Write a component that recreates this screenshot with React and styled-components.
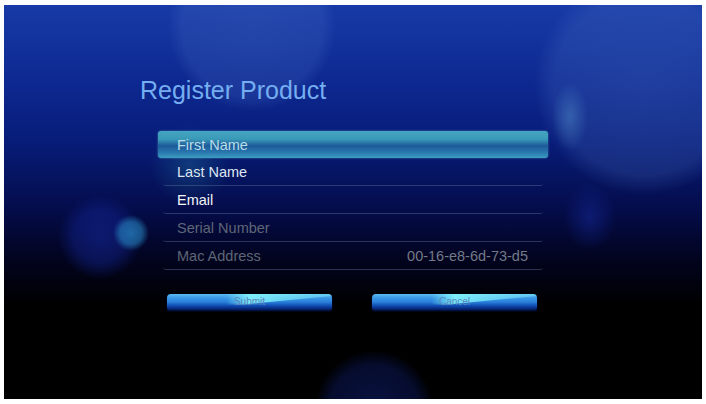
import React from "react";
import styled, { createGlobalStyle } from "styled-components";

const GlobalStyle = createGlobalStyle`
  html, body {
    margin: 0;
    padding: 0;
    background: #ffffff;
  }
  body {
    font-family: "Liberation Sans", Arial, sans-serif;
  }
`;

const Screen = styled.div`
  position: relative;
  overflow: hidden;
  margin: 5px 0 0 4px;
  width: 698px;
  height: 394px;
  box-sizing: border-box;
  padding: 70px 0 0 136px;
  background:
    radial-gradient(circle at 640px 80px, rgba(80, 120, 200, 0.28) 0, rgba(80, 120, 200, 0.22) 90px, rgba(80, 120, 200, 0) 110px),
    radial-gradient(ellipse 18px 34px at 566px 112px, rgba(110, 190, 230, 0.35) 0, rgba(110, 190, 230, 0) 100%),
    radial-gradient(circle at 248px 22px, rgba(90, 130, 210, 0.22) 0, rgba(90, 130, 210, 0.18) 70px, rgba(90, 130, 210, 0) 84px),
    radial-gradient(circle at 127px 228px, rgba(40, 140, 200, 0.7) 0, rgba(40, 140, 200, 0.55) 11px, rgba(40, 140, 200, 0) 18px),
    radial-gradient(circle at 96px 232px, rgba(20, 40, 160, 0.55) 0, rgba(20, 40, 160, 0.4) 26px, rgba(20, 40, 160, 0) 42px),
    radial-gradient(ellipse 26px 34px at 586px 212px, rgba(20, 40, 150, 0.55) 0, rgba(20, 40, 150, 0) 100%),
    radial-gradient(circle at 186px 160px, rgba(40, 150, 170, 0.28) 0, rgba(40, 150, 170, 0) 40px),
    radial-gradient(circle at 370px 405px, rgba(20, 40, 150, 0.45) 0, rgba(20, 40, 150, 0.3) 45px, rgba(20, 40, 150, 0) 60px),
    linear-gradient(to bottom, #173aa6 0%, #0d2890 20%, #071c78 35%, #040c4a 52%, #020420 64%, #000000 76%, #000000 100%);
`;

const Title = styled.h1`
  margin: 0;
  font-family: "Liberation Sans", Arial, sans-serif;
  font-weight: normal;
  font-size: 25px;
  line-height: 30px;
  color: #74aef0;
`;

const Form = styled.div`
  display: flex;
  flex-direction: column;
  width: 390px;
  margin: 26px 0 0 18px;
`;

const Row = styled.div`
  display: flex;
  justify-content: space-between;
  align-items: center;
  height: 27px;
  padding: 0 20px 0 19px;
  font-size: 14.5px;
  color: ${(p) => p.$color};
  border-radius: 3px;
  ${(p) =>
    p.$active
      ? `
    background: linear-gradient(to bottom, #45a6c0 0%, #3a9ab8 30%, #1c5a98 55%, #2a78b0 80%, #3c9ec0 100%);
    box-shadow: 0 0 2px rgba(120, 210, 230, 0.6);
  `
      : `
    margin: 0 5px;
    padding: 0 15px 0 14px;
    border-bottom: 1px solid rgba(90, 110, 150, 0.45);
  `}
`;

const Value = styled.span`
  color: #727a88;
`;

const Buttons = styled.div`
  display: flex;
  gap: 40px;
  margin: 24px 0 0 27px;
`;

const Button = styled.button`
  position: relative;
  overflow: hidden;
  width: 165px;
  height: 16px;
  padding: 0;
  border: none;
  border-radius: 4px 4px 2px 2px;
  font-family: "Liberation Sans", Arial, sans-serif;
  font-size: 10px;
  line-height: 16px;
  color: #5a86c0;
  background: linear-gradient(to bottom, #5cbaf2 0%, #3a98e6 25%, #2a80da 50%, #0f48b0 75%, #041a60 100%);
  box-shadow: 0 1px 2px rgba(0, 40, 140, 0.6);

  &::before {
    content: "";
    position: absolute;
    inset: 0;
    background: linear-gradient(to right, rgba(130, 245, 250, 0) 36%, rgba(130, 245, 250, 0.9) 50%, rgba(130, 245, 250, 0.35) 100%);
    clip-path: polygon(36% 0, 100% 0, 100% 12%, 46% 66%, 36% 66%);
  }

  span {
    position: relative;
  }
`;

export default function App() {
  return (
    <>
      <GlobalStyle />
      <Screen>
        <Title>Register Product</Title>
        <Form>
          <Row $active $color="#b8dce8">First Name</Row>
          <Row $color="#dde6f2">Last Name</Row>
          <Row $color="#f2f4f8">Email</Row>
          <Row $color="#5e6676">Serial Number</Row>
          <Row $color="#5e6676">
            Mac Address
            <Value>00-16-e8-6d-73-d5</Value>
          </Row>
        </Form>
        <Buttons>
          <Button>
            <span>Submit</span>
          </Button>
          <Button>
            <span>Cancel</span>
          </Button>
        </Buttons>
      </Screen>
    </>
  );
}
